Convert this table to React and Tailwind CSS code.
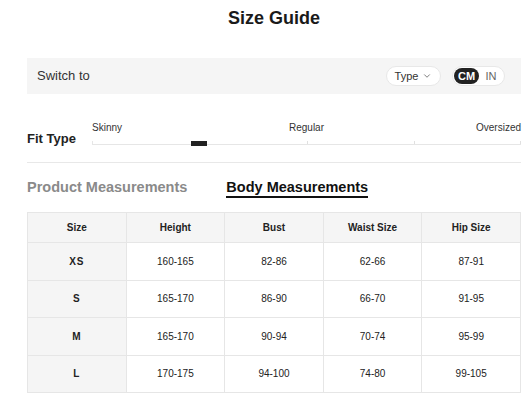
import { ChevronDown } from 'lucide-react'

const rows = [
  { size: 'XS', height: '160-165', bust: '82-86', waist: '62-66', hip: '87-91' },
  { size: 'S', height: '165-170', bust: '86-90', waist: '66-70', hip: '91-95' },
  { size: 'M', height: '165-170', bust: '90-94', waist: '70-74', hip: '95-99' },
  { size: 'L', height: '170-175', bust: '94-100', waist: '74-80', hip: '99-105' },
]

const headers = ['Size', 'Height', 'Bust', 'Waist Size', 'Hip Size']

function FitSlider() {
  return (
    <div className="flex-1">
      <div className="grid grid-cols-[1fr_auto_1fr] text-[10px] leading-[12px] text-[#333]">
        <span>Skinny</span>
        <span>Regular</span>
        <span className="text-right">Oversized</span>
      </div>
      <div className="relative mt-[10px] h-px bg-[#e6e6e6]">
        <span className="absolute left-0 -top-[3px] w-px h-[3px] bg-[#e6e6e6]" />
        <span className="absolute left-1/2 -top-[3px] w-px h-[3px] bg-[#e0e0e0]" />
        <span className="absolute left-3/4 -top-[3px] w-px h-[3px] bg-[#e0e0e0]" />
        <span className="absolute right-0 -top-[3px] w-px h-[3px] bg-[#e0e0e0]" />
        <span className="absolute left-[99px] -top-[3px] w-[16px] h-[5px] bg-[#222]" />
      </div>
    </div>
  )
}

function App() {
  return (
    <div className="w-[529px] h-[400px] bg-white pl-[27px] pr-[8px] font-['Liberation_Sans',Arial,sans-serif] text-[#222] overflow-hidden">
      <h1 className="pt-[8px] text-center text-[18px] leading-[20px] font-bold text-[#1a1a1a]">
        Size Guide
      </h1>

      <div className="mt-[30px] h-[36px] bg-[#f5f5f5] flex items-center pl-[10px] pr-[16px]">
        <span className="flex-1 text-[13px] text-[#333]">Switch to</span>
        <button className="h-[20px] w-[55px] rounded-full bg-white border border-[#e8e8e8] flex items-center justify-center gap-[4px] text-[11px] text-[#333]">
          Type
          <ChevronDown size={10} strokeWidth={1.5} />
        </button>
        <div className="ml-[11px] h-[20px] w-[53px] rounded-full bg-white border border-[#e8e8e8] flex items-center p-[1px]">
          <span className="h-[16px] w-[25px] rounded-full bg-[#222] text-white text-[11px] font-bold flex items-center justify-center">
            CM
          </span>
          <span className="flex-1 text-center text-[11px] text-[#666]">IN</span>
        </div>
      </div>

      <div className="mt-[28px] flex">
        <div className="w-[65px] pt-[9px] text-[13px] leading-[16px] font-bold text-[#222]">Fit Type</div>
        <FitSlider />
      </div>

      <div className="mt-[15px] border-t border-[#e8e8e8]" />

      <div className="pt-[16px] flex gap-[39px] text-[14.5px] leading-[16px] font-bold">
        <button className="pb-[1px] border-b-2 border-transparent text-[#8a8a8a]">
          Product Measurements
        </button>
        <button className="pb-[1px] border-b-2 border-[#111] text-[#111]">Body Measurements</button>
      </div>

      <table className="mt-[14px] w-full table-fixed border-collapse text-[10px] text-[#222]">
        <thead>
          <tr className="h-[30px] bg-[#f5f5f5]">
            {headers.map((h) => (
              <th key={h} className="border border-[#e6e6e6] font-bold">
                {h}
              </th>
            ))}
          </tr>
        </thead>
        <tbody>
          {rows.map((r) => (
            <tr key={r.size} className="h-[37.5px]">
              <td className="border border-[#e6e6e6] bg-[#f5f5f5] text-center font-bold tracking-[1px]">
                {r.size}
              </td>
              <td className="border border-[#e6e6e6] text-center">{r.height}</td>
              <td className="border border-[#e6e6e6] text-center">{r.bust}</td>
              <td className="border border-[#e6e6e6] text-center">{r.waist}</td>
              <td className="border border-[#e6e6e6] text-center">{r.hip}</td>
            </tr>
          ))}
        </tbody>
      </table>
    </div>
  )
}

export default App
